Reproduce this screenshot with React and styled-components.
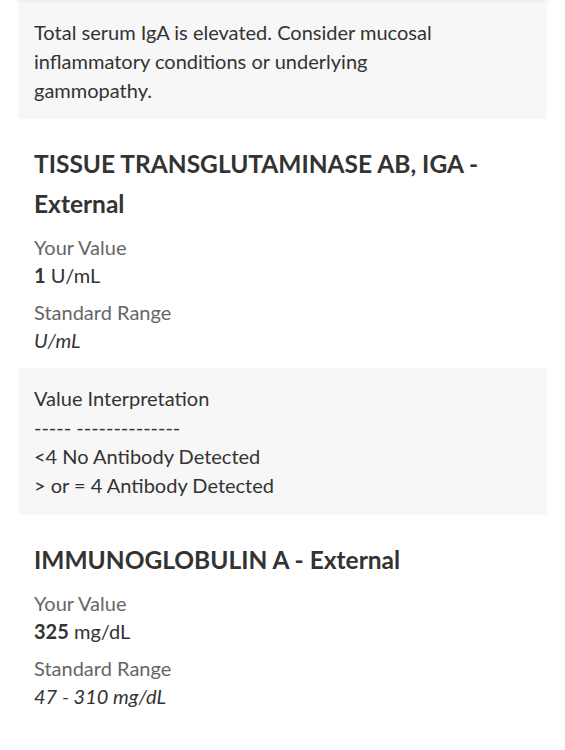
import React from 'react';
import styled, { createGlobalStyle } from 'styled-components';

const GlobalStyle = createGlobalStyle`
  body {
    margin: 0;
    background: #ffffff;
    font-family: Lato, "Noto Sans", sans-serif;
    color: #333333;
  }
`;

const Page = styled.div`
  width: 565px;
  padding: 0 18px 40px;
  box-sizing: border-box;
  overflow: hidden;
`;

const PrevCard = styled.div`
  height: 4px;
  margin-top: -4px;
  background: #ffffff;
  box-shadow: 0 2px 6px rgba(0, 0, 0, 0.14);
`;

const Note = styled.div`
  background: #f7f7f7;
  border-radius: 2px;
  margin-top: ${({ first }) => (first ? '5px' : '0')};
  padding: ${({ first }) => (first ? '13px 70px 14px 16px' : '16px 16px 15px')};
  font-size: 20px;
  line-height: 29px;
  color: #333333;
`;

const Result = styled.section`
  padding: 25px 16px 5px;
`;

const Title = styled.h2`
  margin: 0 0 9px;
  font-size: 24.5px;
  line-height: 40px;
  font-weight: 700;
  color: #333333;
`;

const Field = styled.div`
  margin-bottom: 9px;
  font-size: 20px;
  line-height: 28px;
`;

const Label = styled.div`
  color: #666666;
`;

const Value = styled.div`
  color: #333333;
  font-style: ${({ italic }) => (italic ? 'italic' : 'normal')};

  b {
    font-weight: 700;
  }
`;

const results = [
  {
    title: 'TISSUE TRANSGLUTAMINASE AB, IGA - External',
    value: '1',
    unit: 'U/mL',
    range: 'U/mL',
    interpretation: [
      'Value Interpretation',
      '----- --------------',
      '<4 No Antibody Detected',
      '> or = 4 Antibody Detected',
    ],
  },
  {
    title: 'IMMUNOGLOBULIN A - External',
    value: '325',
    unit: 'mg/dL',
    range: '47 - 310 mg/dL',
  },
];

const App = () => {
  return (
    <Page>
      <GlobalStyle />
      <PrevCard />
      <Note first>
        Total serum IgA is elevated. Consider mucosal inflammatory conditions or underlying
        gammopathy.
      </Note>
      {results.map((r) => (
        <React.Fragment key={r.title}>
          <Result>
            <Title>{r.title}</Title>
            <Field>
              <Label>Your Value</Label>
              <Value>
                <b>{r.value}</b> {r.unit}
              </Value>
            </Field>
            <Field>
              <Label>Standard Range</Label>
              <Value italic>{r.range}</Value>
            </Field>
          </Result>
          {r.interpretation && (
            <Note>
              {r.interpretation.map((line, i) => (
                <div key={i}>{line}</div>
              ))}
            </Note>
          )}
        </React.Fragment>
      ))}
    </Page>
  );
};

export default App;
